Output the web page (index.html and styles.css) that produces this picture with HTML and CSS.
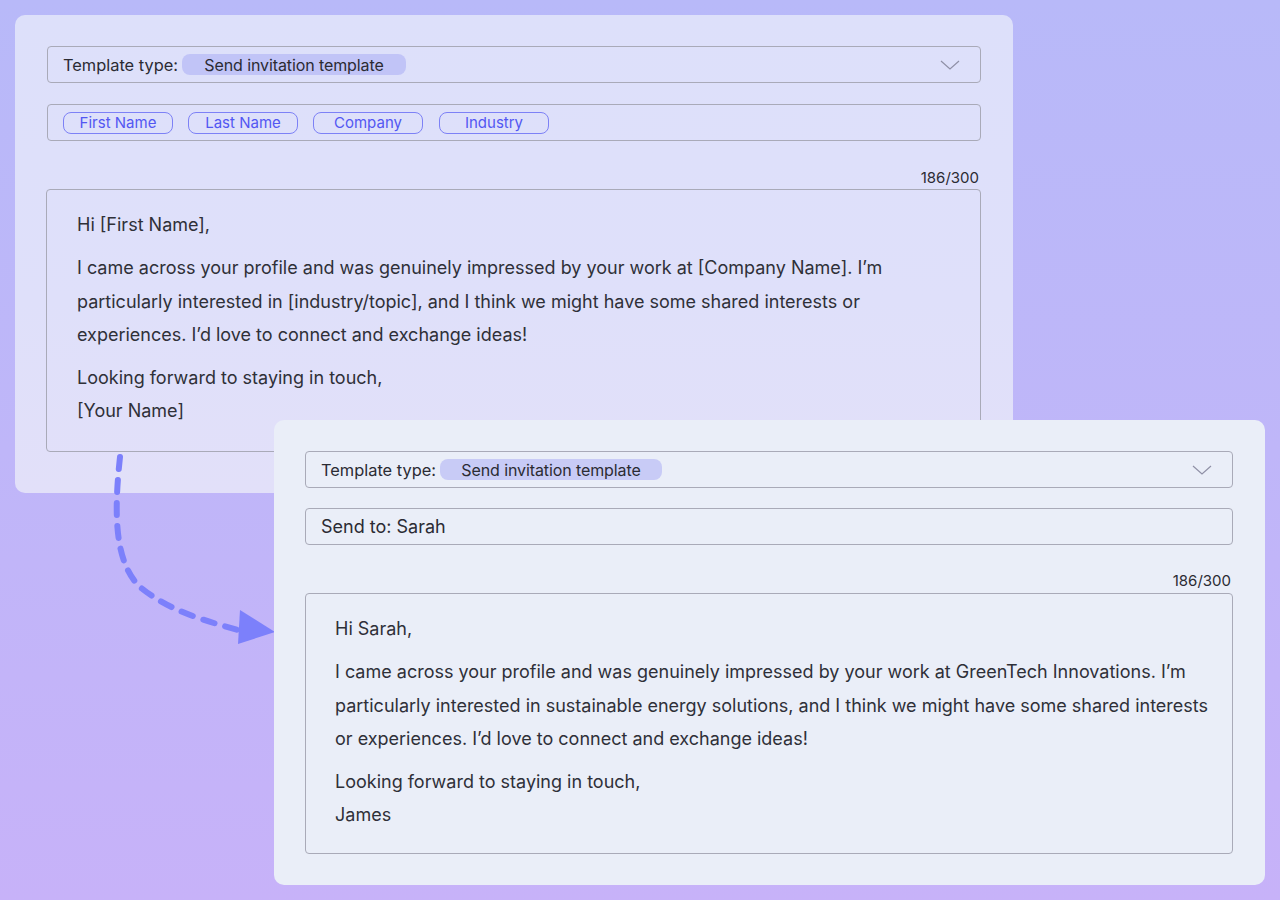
FILE: index.html
```html
<!DOCTYPE html>
<html>
<head>
<meta charset="utf-8">
<link rel="stylesheet" href="styles.css">
</head>
<body>
<div class="canvas">
  <section class="panel panel-a">
    <div class="field select">
      <span class="label">Template type:</span>
      <span class="pill">Send invitation template</span>
      <svg class="chev" width="20" height="10" viewBox="0 0 20 10"><path d="M1 1 L10 9 L19 1" fill="none" stroke="#8f90a6" stroke-width="1.2"/></svg>
    </div>
    <div class="field chips">
      <span class="chip">First Name</span>
      <span class="chip">Last Name</span>
      <span class="chip">Company</span>
      <span class="chip">Industry</span>
    </div>
    <div class="counter">186/300</div>
    <div class="editor">
      <p>Hi [First Name],</p>
      <p>I came across your profile and was genuinely impressed by your work at [Company Name]. I’m<br>particularly interested in [industry/topic], and I think we might have some shared interests or<br>experiences. I’d love to connect and exchange ideas!</p>
      <p>Looking forward to staying in touch,<br>[Your Name]</p>
    </div>
  </section>

  <svg class="arrow" width="180" height="200" viewBox="0 0 180 200">
    <path d="M20 5 C 14 60, 14 110, 40 135 C 70 160, 110 170, 138 178" fill="none" stroke="#7c80fb" stroke-width="6" stroke-linecap="round" stroke-dasharray="12 11"/>
    <path d="M140 158 L175 180 L138 192 Z" fill="#7c80fb"/>
  </svg>

  <section class="panel panel-b">
    <div class="field select">
      <span class="label">Template type:</span>
      <span class="pill">Send invitation template</span>
      <svg class="chev" width="20" height="10" viewBox="0 0 20 10"><path d="M1 1 L10 9 L19 1" fill="none" stroke="#8f90a6" stroke-width="1.2"/></svg>
    </div>
    <div class="field sendto">Send to: Sarah</div>
    <div class="counter">186/300</div>
    <div class="editor">
      <p>Hi Sarah,</p>
      <p>I came across your profile and was genuinely impressed by your work at GreenTech Innovations. I’m<br>particularly interested in sustainable energy solutions, and I think we might have some shared interests<br>or experiences. I’d love to connect and exchange ideas!</p>
      <p>Looking forward to staying in touch,<br>James</p>
    </div>
  </section>
</div>
</body>
</html>
```

FILE: styles.css
```css
* { box-sizing: border-box; }
html, body { margin: 0; padding: 0; }
body {
  width: 1280px;
  height: 900px;
  overflow: hidden;
  font-family: "Inter", "Noto Sans", sans-serif;
  color: #2b2b33;
  background: linear-gradient(180deg, #b8b9f9 0%, #bfb6f9 50%, #c7b2f9 100%);
}
.canvas { position: relative; width: 1280px; height: 900px; }

.panel {
  position: absolute;
  border-radius: 10px;
  display: flex;
  flex-direction: column;
}
.panel-a {
  left: 15px; top: 15px; width: 998px; height: 478px;
  padding: 31px 32px 0 32px;
  background: linear-gradient(180deg, #dde0fa 0%, #dfe0fa 60%, #e2e0f9 100%);
}
.panel-b {
  left: 274px; top: 420px; width: 991px; height: 465px;
  padding: 31px 32px 0 31px;
  background: #eaeef8;
}

.field {
  height: 37px;
  border: 1px solid #a9aab8;
  border-radius: 4px;
  display: flex;
  align-items: center;
}
.select { padding-left: 15px; padding-right: 20px; }
.label { font-size: 16.4px; color: #2b2b33; letter-spacing: 0; }
.pill {
  margin-left: 4px;
  width: 224px;
  height: 21px;
  border-radius: 8px;
  background: #c1c4f7;
  font-size: 16px;
  display: flex; align-items: center; justify-content: center;
  color: #2b2b33;
  letter-spacing: -0.1px;
}
.panel-b .pill { background: #c8cbf6; width: 222px; }
.chev { margin-left: auto; }

.chips {
  margin-top: 21px;
  padding-left: 15px;
  gap: 15px;
}
.chip {
  width: 110px; height: 22px;
  border: 1px solid #7d81f6;
  border-radius: 8px;
  color: #5357f2;
  font-size: 15px;
  display: flex; align-items: center; justify-content: center;
}
.chip:nth-child(4) { margin-left: 1px; }

.sendto {
  margin-top: 20px;
  padding-left: 15px;
  font-size: 18px;
  color: #2b2b33;
}

.counter {
  text-align: right;
  font-size: 15px;
  padding-right: 2px;
  color: #2b2b33;
  line-height: 18px;
}
.panel-a .counter { margin-top: 28px; }
.panel-b .counter { margin-top: 27px; }

.editor {
  margin-top: 2px;
  border: 1px solid #a9aab8;
  border-radius: 4px;
  padding: 18px 20px 0 30px;
  font-size: 18px;
  line-height: 33.3px;
  color: #2f3038;
}
.panel-a .editor { height: 263px; margin-left: -1px; }
.panel-b .editor { height: 261px; padding-left: 29px; padding-right: 10px; margin-top: 3px; }
.editor p { margin: 0 0 10px 0; white-space: nowrap; }

.arrow {
  position: absolute;
  left: 100px; top: 452px;
}
```
